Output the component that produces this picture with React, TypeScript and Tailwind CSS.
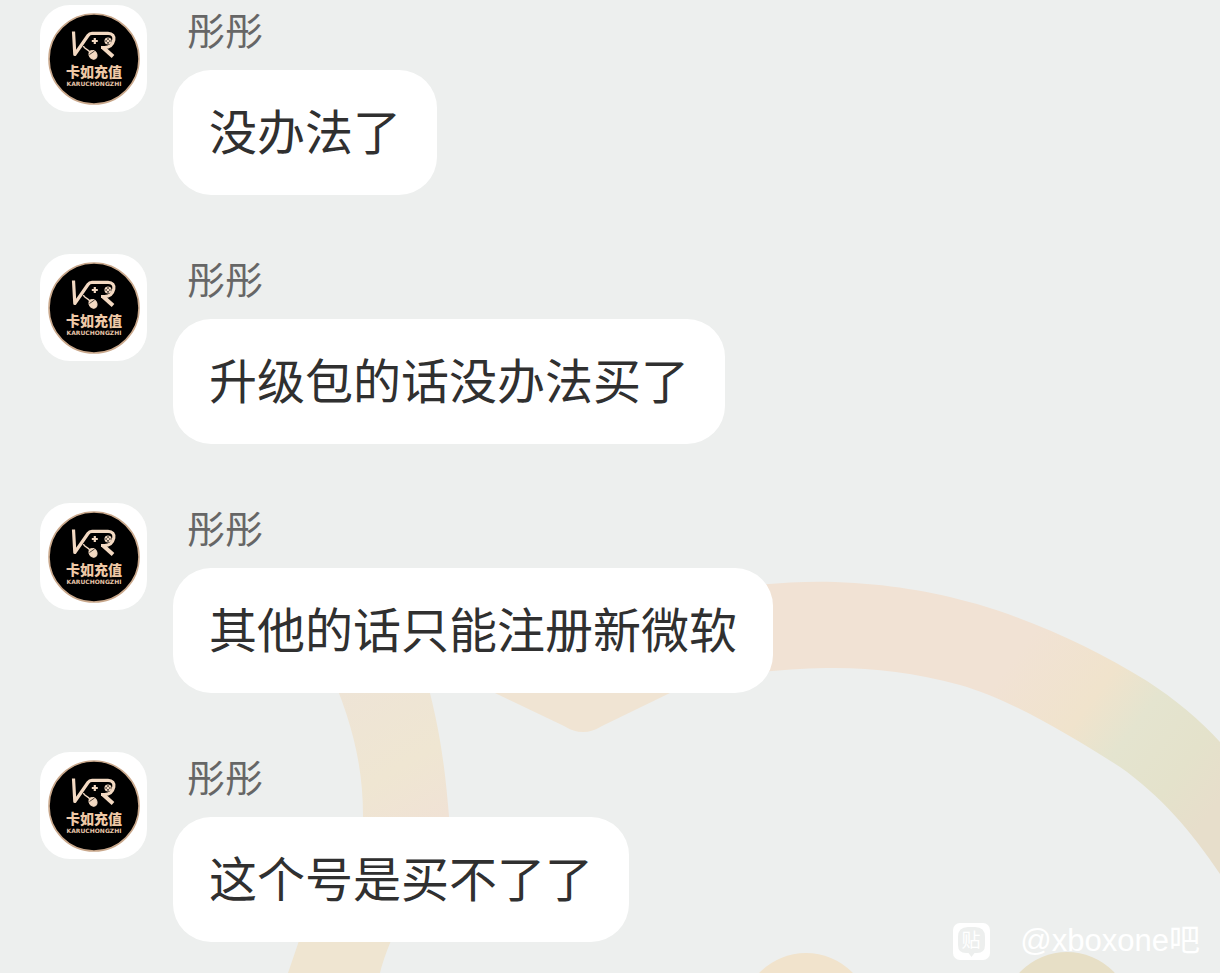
import React from 'react';

interface Message {
  id: number;
  author: string;
  text: string;
}

const messages: Message[] = [
  { id: 1, author: '彤彤', text: '没办法了' },
  { id: 2, author: '彤彤', text: '升级包的话没办法买了' },
  { id: 3, author: '彤彤', text: '其他的话只能注册新微软' },
  { id: 4, author: '彤彤', text: '这个号是买不了了' },
];

const Avatar: React.FC = () => (
  <div className="relative size-[107px] shrink-0 overflow-hidden rounded-[30px] bg-white">
    <svg viewBox="0 0 107 107" className="size-full" fill="none" aria-hidden="true">
      <circle cx="54" cy="54" r="45" fill="#000" stroke="#c9a88c" strokeWidth="1.6" />
      <g stroke="#f3d9c2" strokeLinejoin="round">
        {/* K and R share one line */}
        <path d="M33.500 26.500 34.800 49.500 48 30.500Q49.500 28.400 52 28.400H68c4.500 0 6.600 3 5.800 6.600-1 4.500-4.300 7.500-9.300 7.500h-3.500" strokeWidth="3.200" />
        <path d="M63 42.500 73 51.500" strokeWidth="4" />
        {/* cable and mouse */}
        <path d="M43.500 41c.5 3.500 5 2.500 6.500 6.500" strokeWidth="1.400" />
        <ellipse cx="53" cy="49.800" rx="3.800" ry="4.600" fill="#f3d9c2" strokeWidth="1" transform="rotate(-35 53 49.800)" />
        <path d="M49.500 49.500l5-3.500" stroke="#000" strokeWidth=".7" />
        {/* gamepad buttons */}
        <path d="M54.800 33v6M51.800 36h6" strokeWidth="2.200" />
        <circle cx="68" cy="36" r="3.300" fill="#f3d9c2" strokeWidth=".5" />
      </g>
      <g fill="#000">
        <circle cx="68" cy="34.100" r=".8" />
        <circle cx="68" cy="37.900" r=".8" />
        <circle cx="66.100" cy="36" r=".8" />
        <circle cx="69.900" cy="36" r=".8" />
      </g>
      <text x="54" y="72" textAnchor="middle" fill="#eec8a6" className="text-[14px] font-black [font-family:'Noto_Sans_CJK_SC',sans-serif]">
        卡如充值
      </text>
      <text x="54" y="81" textAnchor="middle" fill="#e6c4a8" className="text-[6px] font-bold [font-family:'DejaVu_Sans',sans-serif]">
        KARUCHONGZHI
      </text>
    </svg>
  </div>
);

const Wallpaper: React.FC = () => (
  <svg
    viewBox="0 0 1220 973"
    preserveAspectRatio="xMidYMid slice"
    className="absolute inset-0 size-full"
    aria-hidden="true"
  >
    <defs>
      <linearGradient id="arc" gradientUnits="userSpaceOnUse" x1="1020" y1="650" x2="1220" y2="800">
        <stop offset="0" stopColor="#f1e2d4" />
        <stop offset=".35" stopColor="#f0e3cc" />
        <stop offset=".55" stopColor="#e4e4cf" />
        <stop offset=".8" stopColor="#e4e2cb" />
        <stop offset="1" stopColor="#e7decb" />
      </linearGradient>
      <linearGradient id="band" gradientUnits="userSpaceOnUse" x1="340" y1="690" x2="420" y2="830">
        <stop offset="0" stopColor="#eee4d6" />
        <stop offset=".6" stopColor="#efe6d2" />
        <stop offset="1" stopColor="#f0e2d5" />
      </linearGradient>
    </defs>
    <path d="M740 587C773 583 803 581 835 582C888 584 930 591 977 604C1040 623 1095 649 1147 681C1175 699 1200 720 1220 742L1240 765V905L1220 874C1192 832 1160 795 1120 767C1070 735 1010 699 960 685C915 673 875 668 835 668C805 668 780 670 740 674Z" fill="url(#arc)" />
    <path d="M325 660C352 719 363 765 363 816V860H449V816C445 770 441 728 421 660Z" fill="url(#band)" />
    <path d="M310 910Q299 940 288 973H380Q384 955 400 920Z" fill="#efe5d1" />
    <path d="M470 681L564 726Q583 738 602 726L672 692L700 670Z" fill="#f0e4d3" />
    <circle cx="806" cy="1018" r="65" fill="#f1e3cc" />
    <circle cx="1067" cy="1017" r="65" fill="#e7dfc6" />
  </svg>
);

const Watermark: React.FC = () => (
  <div className="absolute right-5 bottom-3 flex items-center gap-[30px] text-white">
    <svg viewBox="0 0 37 37" className="size-[37px]" aria-hidden="true">
      <rect width="37" height="37" rx="7" fill="#fff" />
      <path d="M15 4h7q10 0 10 10v8q0 8-8 8h-2.500L18.500 34l-3-4H13q-8 0-8-8v-8Q5 4 15 4z" fill="#edefee" />
      <text x="18" y="24" textAnchor="middle" fill="#fff" className="text-[19px] font-normal [font-family:'Noto_Sans_CJK_SC',sans-serif]">
        贴
      </text>
    </svg>
    <span className="text-[31px] leading-[40px] [font-family:'Liberation_Sans','Noto_Sans_CJK_SC',sans-serif]">
      @xboxone吧
    </span>
  </div>
);

const App: React.FC = () => {
  return (
    <main className="relative min-h-screen overflow-hidden bg-[#edefee] [font-family:'Noto_Sans_CJK_SC',sans-serif]">
      <Wallpaper />
      <ul className="relative flex flex-col gap-[59px] px-10 pt-[5px] pb-7">
        {messages.map((message) => (
          <li key={message.id} className="flex items-start gap-[26px]">
            <Avatar />
            <div className="flex flex-col items-start gap-[18px]">
              <h2 className="pl-[14px] text-[38px] leading-[47px] font-normal text-[#666]">{message.author}</h2>
              <p className="rounded-[38px] bg-white px-9 pt-[27px] pb-[33px] text-[48px] leading-[65px] text-[#303030]">
                {message.text}
              </p>
            </div>
          </li>
        ))}
      </ul>
      <Watermark />
    </main>
  );
};

export default App;
